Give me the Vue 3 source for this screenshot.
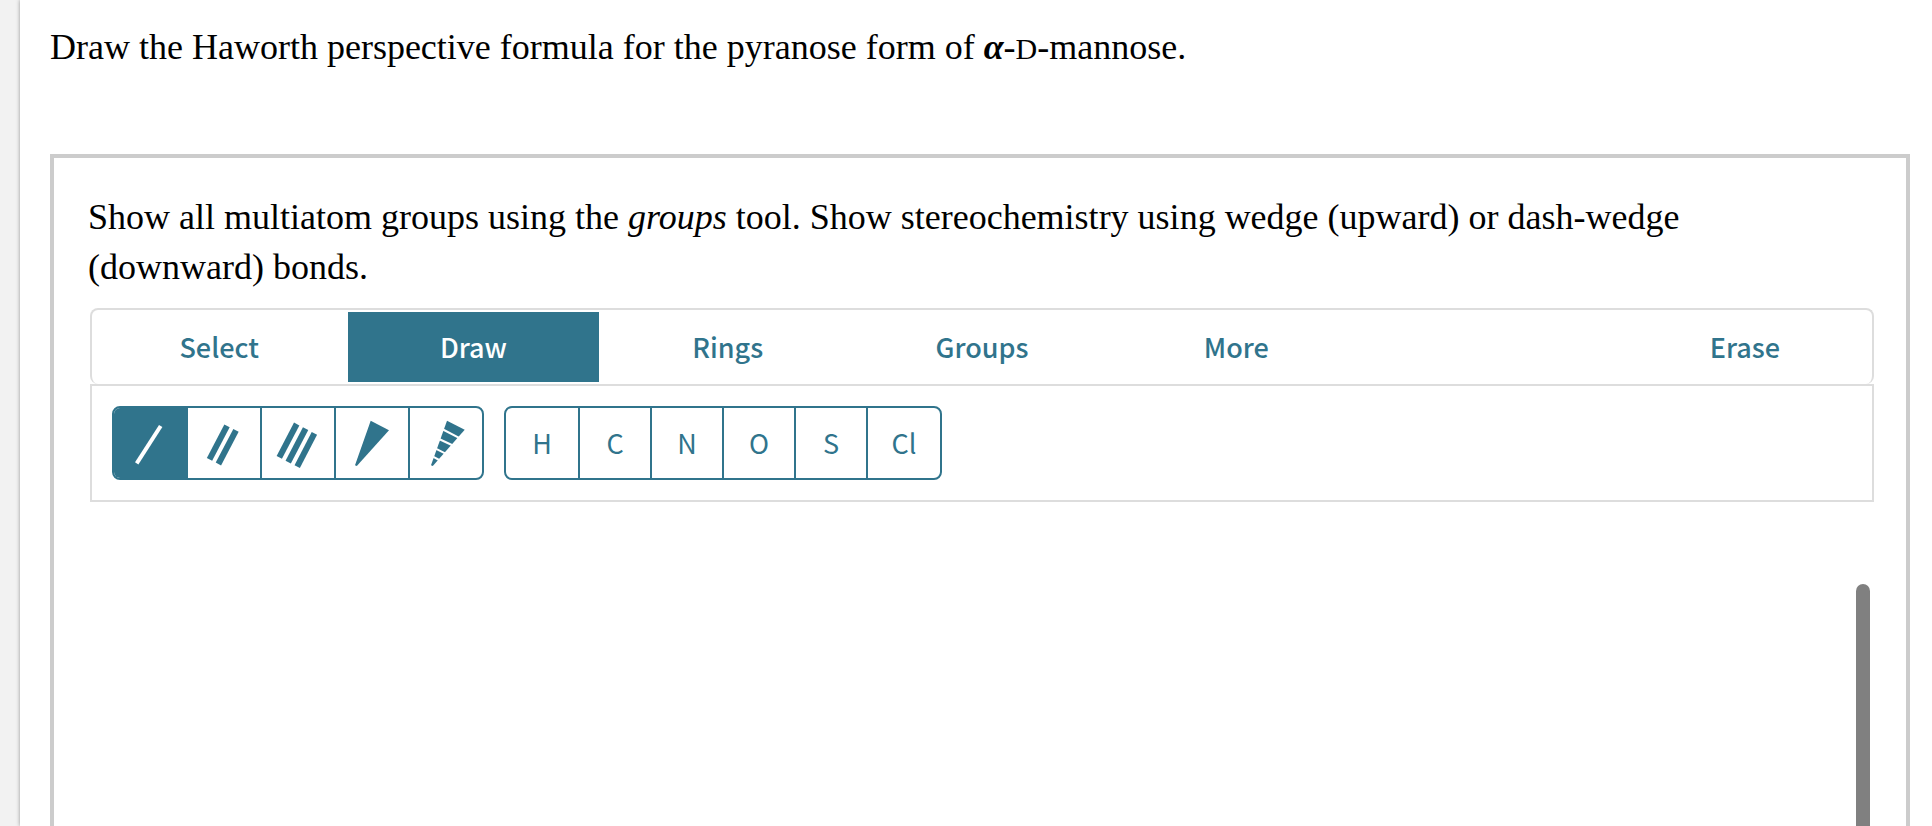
<script setup>
import { ref } from 'vue'

const tabs = [
  { name: 'Select' },
  { name: 'Draw' },
  { name: 'Rings' },
  { name: 'Groups' },
  { name: 'More' },
  { name: 'Erase', last: true },
]
const activeTab = ref('Draw')

const bonds = [
  { name: 'Single bond', thin: true, lines: ['M22.7 55.3L46.7 18'] },
  { name: 'Double bond', lines: ['M39 17.8L21.5 51.3', 'M48 22.4L30.4 56'] },
  { name: 'Triple bond', lines: ['M34.7 16L17.3 49.3', 'M43.6 20.7L26.2 54.2', 'M52.4 25.3L35.2 58.7'] },
  { name: 'Wedge bond', shape: 'M34.7 12.7L53 22.3L20.8 58L19 57.3Z' },
  {
    name: 'Dash-wedge bond',
    shape: 'M37 12.7L54.7 21.7L22.8 58L21 57.3Z',
    gaps: ['M32 21L51 30.8', 'M29 31L44 38', 'M25.7 40.7L37 46.3', 'M23 48.6L31 53'],
  },
]
const atoms = ['H', 'C', 'N', 'O', 'S', 'Cl']
const activeTool = ref('Single bond')
</script>

<template>
  <main class="page">
    <p class="question">
      Draw the Haworth perspective formula for the pyranose form of <i class="alpha">α</i>-<span class="small">D</span>-mannose.
    </p>
    <section class="editor">
      <p class="hint">
        Show all multiatom groups using the <em>groups</em> tool. Show stereochemistry using wedge (upward) or dash-wedge (downward) bonds.
      </p>
      <nav class="tabs">
        <button
          v-for="tab in tabs"
          :key="tab.name"
          type="button"
          class="tab"
          :class="{ active: tab.name === activeTab, last: tab.last }"
          @click="activeTab = tab.name"
        >{{ tab.name }}</button>
      </nav>
      <div class="tools">
        <div class="group">
          <button
            v-for="bond in bonds"
            :key="bond.name"
            type="button"
            class="tool bond"
            :class="{ active: bond.name === activeTool }"
            :aria-label="bond.name"
            @click="activeTool = bond.name"
          >
            <svg viewBox="0 0 72 70" class="icon">
              <path v-for="d in bond.lines" :key="d" :d="d" class="stroke" :class="{ thin: bond.thin }" />
              <path v-if="bond.shape" :d="bond.shape" class="wedge" />
              <path v-for="d in bond.gaps" :key="d" :d="d" class="gap" />
            </svg>
          </button>
        </div>
        <div class="group">
          <button
            v-for="atom in atoms"
            :key="atom"
            type="button"
            class="tool atom"
            :class="{ active: atom === activeTool }"
            @click="activeTool = atom"
          >{{ atom }}</button>
        </div>
      </div>
      <div class="canvas">
        <div class="thumb"></div>
      </div>
    </section>
  </main>
</template>

<style>
body {
  background: #f2f2f2;
}
</style>

<style scoped>
.page {
  box-sizing: border-box;
  display: flex;
  flex-direction: column;
  height: 100vh;
  margin-left: 20px;
  padding: 22px 22px 0 30px;
  overflow: hidden;
  background: #fff;
  box-shadow: 0 0 4px rgba(0, 0, 0, 0.4);
  color: #000;
  font-family: "Liberation Serif", "Times New Roman", serif;
  font-size: 36px;
  line-height: 50px;
}
p {
  margin: 0;
}
.alpha {
  font-weight: bold;
}
.small {
  font-size: 30px;
  line-height: 1;
}
.editor {
  display: flex;
  flex: 1;
  flex-direction: column;
  margin-top: 82px;
  padding: 34px 32px 0 36px;
  border: 4px solid #ccc;
  border-bottom: 0;
}
.hint {
  margin: 0 100px 16px -2px;
}
.tabs {
  display: grid;
  grid-template-columns: repeat(7, 1fr);
  height: 74px;
  border: 2px solid #ddd;
  border-bottom: 0;
  border-radius: 8px;
}
button {
  padding: 0;
  border: 0;
  background: none;
  color: #30748c;
  font-family: "Noto Sans CJK SC", "Noto Sans", sans-serif;
  font-size: 27px;
  font-weight: 500;
  line-height: 40px;
  cursor: pointer;
}
.tab {
  margin: 2px;
}
.tab.last {
  grid-column: 7;
}
.active {
  background: #30748c;
  color: #fff;
}
.tools {
  display: flex;
  gap: 20px;
  padding: 20px;
  border: 2px solid #ddd;
}
.group {
  display: flex;
  overflow: hidden;
  border: 2px solid #30748c;
  border-radius: 8px;
}
.tool {
  box-sizing: content-box;
  height: 70px;
}
.tool + .tool {
  border-left: 2px solid #30748c;
}
.bond {
  width: 72px;
}
.atom {
  width: 70px;
  font-weight: 400;
}
.atom:first-child,
.atom:last-child {
  width: 72px;
}
.icon {
  display: block;
  width: 72px;
  height: 70px;
}
.stroke {
  stroke: currentColor;
  stroke-width: 6;
}
.stroke.thin {
  stroke-width: 4;
}
.wedge {
  fill: currentColor;
}
.gap {
  stroke: #fff;
  stroke-width: 2;
}
.canvas {
  display: flex;
  flex: 1;
  justify-content: flex-end;
  padding: 82px 4px 0 0;
}
.thumb {
  width: 14px;
  border-radius: 7px 7px 0 0;
  background: #808080;
}
</style>
